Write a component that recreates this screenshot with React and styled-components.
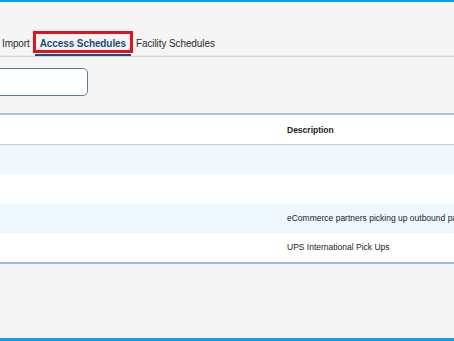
import styled, { createGlobalStyle } from 'styled-components'

const GlobalStyle = createGlobalStyle`
  html, body {
    margin: 0;
    padding: 0;
    background: #f5f5f5;
    font-family: "Liberation Sans", Arial, sans-serif;
  }
`

const Page = styled.div`
  height: 341px;
  box-sizing: border-box;
  border-top: 2px solid #0ba1ea;
  border-bottom: 3px solid #1b9ae0;
  background: #f5f5f5;
  overflow: hidden;
  display: flex;
  flex-direction: column;
`

const TabBar = styled.nav`
  display: flex;
  margin-top: 29px;
  margin-left: -3px;
  border-bottom: 1px solid #d3d3d3;
  box-shadow: 0 -1px 0 #ececec inset;
`

const Tab = styled.div`
  position: relative;
  height: 25px;
  line-height: 25px;
  padding: 0 5px;
  box-sizing: border-box;
  font-size: 10px;
  white-space: nowrap;
  color: ${p => (p.$active ? '#1d4b77' : '#2b2b2b')};
  font-weight: ${p => (p.$active ? 700 : 400)};
  letter-spacing: ${p => (p.$active ? '-0.1px' : '-0.1px')};
  border-bottom: 2px solid ${p => (p.$active ? '#1d4b77' : 'transparent')};

  ${p => p.$marked && `
    &::after {
      content: '';
      position: absolute;
      top: 0;
      bottom: 1px;
      left: -2px;
      right: -2px;
      border: 3px solid #e3101e;
    }
  `}
`

const SearchRow = styled.div`
  margin-top: 11px;
  margin-left: -20px;
`

const SearchInput = styled.input`
  display: block;
  width: 108px;
  height: 28px;
  box-sizing: border-box;
  border: 1.5px solid #5b7f9a;
  border-radius: 5px;
  background: #fff;
  outline: none;
`

const Table = styled.div`
  margin-top: 17px;
  border-top: 2px solid #a9c5de;
  border-bottom: 2px solid #a8b9ca;
`

const Row = styled.div`
  display: grid;
  grid-template-columns: 280px 1fr;
  height: ${p => (p.$head ? '29px' : '29.25px')};
  align-items: center;
  background: ${p => (p.$alt ? '#eef8fe' : '#ffffff')};
  border-bottom: ${p => (p.$head ? '1px solid #cdcdcd' : 'none')};
`

const Cell = styled.div`
  padding: 0 7px;
  font-size: 8.5px;
  color: #222;
  font-weight: ${p => (p.$head ? 700 : 400)};
  white-space: nowrap;
  overflow: visible;
`

const rows = [
  { name: '', description: '' },
  { name: '', description: '' },
  { name: '', description: 'eCommerce partners picking up outbound packages' },
  { name: '', description: 'UPS International Pick Ups' },
]

export default function App() {
  return (
    <>
      <GlobalStyle />
      <Page>
        <TabBar>
          <Tab>Import</Tab>
          <Tab $active $marked>Access Schedules</Tab>
          <Tab>Facility Schedules</Tab>
        </TabBar>
        <SearchRow>
          <SearchInput type="text" />
        </SearchRow>
        <Table>
          <Row $head>
            <Cell $head />
            <Cell $head>Description</Cell>
          </Row>
          {rows.map((r, i) => (
            <Row key={i} $alt={i % 2 === 0}>
              <Cell>{r.name}</Cell>
              <Cell>{r.description}</Cell>
            </Row>
          ))}
        </Table>
      </Page>
    </>
  )
}
